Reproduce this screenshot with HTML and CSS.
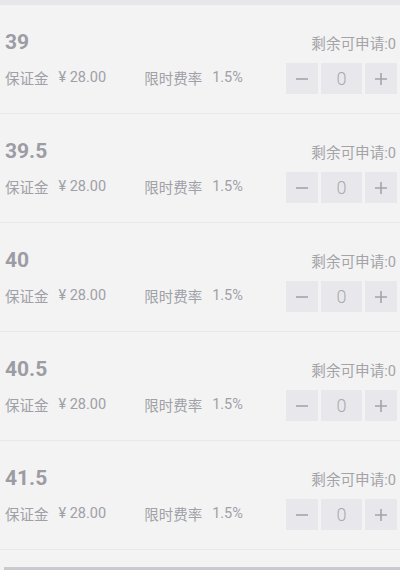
FILE: index.html
```html
<!DOCTYPE html>
<html lang="zh-CN">
<head>
    <meta charset="UTF-8">
    <meta name="viewport" content="width=device-width, initial-scale=1.0">
    <title>申请列表</title>
    <link rel="stylesheet" href="styles.css">
</head>
<body>
    <div class="top-strip"></div>
    <div class="list" id="list"></div>
    <div class="bottom-space"></div>
    <div class="bottom-bar"></div>

    <script>
        const sizes = ['39', '39.5', '40', '40.5', '41.5'];
        const list = document.getElementById('list');

        sizes.forEach(size => {
            list.innerHTML += `
                <div class="item">
                    <div class="item-head">
                        <span class="size">${size}</span>
                        <span class="remain">剩余可申请:0</span>
                    </div>
                    <div class="item-body">
                        <div class="info">
                            <span class="label">保证金</span>
                            <span class="value price">¥ 28.00</span>
                            <span class="label">限时费率</span>
                            <span class="value">1.5%</span>
                        </div>
                        <div class="stepper">
                            <button class="step" aria-label="减少">
                                <svg width="14" height="14" viewBox="0 0 14 14"><path d="M1 7h12" stroke="#a3a3a9" stroke-width="1.6"/></svg>
                            </button>
                            <span class="count">0</span>
                            <button class="step" aria-label="增加">
                                <svg width="14" height="14" viewBox="0 0 14 14"><path d="M1 7h12M7 1v12" stroke="#a3a3a9" stroke-width="1.6"/></svg>
                            </button>
                        </div>
                    </div>
                </div>`;
        });
    </script>
</body>
</html>
```

FILE: styles.css
```css
body {
    margin: 0;
    background-color: #f3f3f3;
    font-family: Roboto, "Noto Sans CJK SC", sans-serif;
    color: #a0a0a7;
}
.top-strip {
    height: 5px;
    background-color: #e7e7eb;
}
.item {
    height: 109px;
    box-sizing: border-box;
    padding: 24px 3px 0 5px;
    border-bottom: 1px solid #e8e8e8;
}
.item-head {
    display: flex;
    justify-content: space-between;
    align-items: center;
    height: 26px;
}
.size {
    font-size: 21px;
    font-weight: bold;
    color: #9c9ca4;
}
.remain {
    font-size: 14.6px;
    color: #a3a3a8;
    margin-right: 1px;
}
.item-body {
    display: flex;
    justify-content: space-between;
    align-items: center;
    margin-top: 8px;
}
.info {
    display: flex;
    align-items: center;
    font-size: 14.5px;
    margin-top: -3px;
}
.label {
    margin-right: 10px;
}
.price {
    margin-right: 38px;
}
.stepper {
    display: flex;
    gap: 3px;
}
.step {
    display: flex;
    align-items: center;
    justify-content: center;
    width: 32px;
    height: 31px;
    padding: 0;
    border: none;
    background-color: #e8e8ec;
}
.count {
    width: 41px;
    height: 31px;
    line-height: 31px;
    text-align: center;
    background-color: #e8e8ec;
    font-size: 18px;
    font-weight: 300;
    color: #a9a9ae;
}
.bottom-space {
    height: 17px;
}
.bottom-bar {
    height: 3px;
    margin-left: 4px;
    background-color: #c9c9ce;
}
```
